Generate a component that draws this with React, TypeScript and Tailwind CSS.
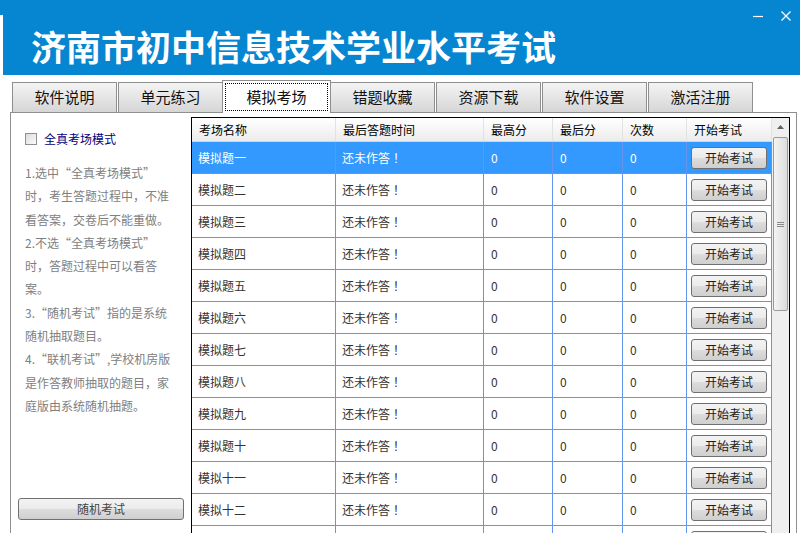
import React from "react"

const tabs = ["软件说明", "单元练习", "模拟考场", "错题收藏", "资源下载", "软件设置", "激活注册"]

const exams = [
  "模拟题一",
  "模拟题二",
  "模拟题三",
  "模拟题四",
  "模拟题五",
  "模拟题六",
  "模拟题七",
  "模拟题八",
  "模拟题九",
  "模拟题十",
  "模拟十一",
  "模拟十二",
  "",
]

const notes = [
  "1.选中“全真考场模式”",
  "时，考生答题过程中，不准",
  "看答案，交卷后不能重做。",
  "2.不选“全真考场模式”",
  "时，答题过程中可以看答",
  "案。",
  "3.“随机考试”指的是系统",
  "随机抽取题目。",
  "4.“联机考试”,学校机房版",
  "是作答教师抽取的题目，家",
  "庭版由系统随机抽题。",
]

const cols = [
  { title: "考场名称", w: "w-[144px]" },
  { title: "最后答题时间", w: "w-[148px]" },
  { title: "最高分", w: "w-[69px]" },
  { title: "最后分", w: "w-[70px]" },
  { title: "次数", w: "w-[64px]" },
  { title: "开始考试", w: "w-[85px]" },
]

function WinButton({ label, className }: { label: string; className?: string }) {
  return (
    <div
      className={`flex items-center justify-center rounded-[3px] border border-[#707070] bg-[linear-gradient(#f3f3f3_0%,#ebebeb_50%,#dddddd_50%,#cfcfcf_100%)] text-[12px] text-[#1a1a1a] ${className ?? ""}`}
    >
      {label}
    </div>
  )
}

export default function App() {
  return (
    <div className="relative w-[800px] h-[533px] overflow-hidden bg-white font-['Noto_Sans_CJK_SC',sans-serif]">
      {/* title bar */}
      <div className="relative h-[75px] bg-[#0686d1] pl-[31px] pt-[28px]">
        <div className="absolute left-0 top-[15px] h-[60px] w-[3px] bg-white" />
        <h1 className="text-[35px] leading-[35px] font-bold text-white">
          济南市初中信息技术学业水平考试
        </h1>
        <div className="absolute right-[8px] top-[10px] flex items-center gap-[16px]">
          <svg width="12" height="12" viewBox="0 0 12 12">
            <path d="M1 6.5h10" stroke="white" strokeWidth="1.2" />
          </svg>
          <svg width="12" height="12" viewBox="0 0 12 12">
            <path d="M1.5 1.5l9 9M10.5 1.5l-9 9" stroke="white" strokeWidth="1.3" />
          </svg>
        </div>
      </div>

      {/* tabs */}
      <div className="flex h-[37px] items-end pl-[12px]">
        {tabs.map((t, i) =>
          i === 2 ? (
            <div
              key={t}
              className="relative z-10 -mb-px -ml-[2px] mr-[-1px] flex h-[33px] w-[109px] items-center justify-center border border-b-0 border-[#8e8f8f] bg-white p-[2px]"
            >
              <div className="flex h-full w-full items-center justify-center border border-dotted border-black text-[15px] text-[#111]">
                {t}
              </div>
            </div>
          ) : (
            <div
              key={t}
              className="mr-px flex h-[30px] w-[105px] items-center justify-center border border-b-0 border-[#8e8f8f] bg-[linear-gradient(#f4f4f4,#d6d6d6)] text-[15px] text-[#111]"
            >
              {t}
            </div>
          )
        )}
      </div>

      {/* tab page */}
      <div className="ml-[10px] flex h-[440px] w-[787px] border border-[#8e8f8f] bg-white">
        {/* left column */}
        <div className="w-[180px] shrink-0">
          <div className="mt-[19px] flex h-[14px] items-center pl-[14px]">
            <div className="h-[12px] w-[12px] border border-[#8e8f8f] bg-[linear-gradient(135deg,#dcdcdc,#fbfbfb)]" />
            <span className="ml-[7px] text-[12px] leading-[14px] text-[#000080]">全真考场模式</span>
          </div>
          <div className="mt-[15px] pl-[14px] text-[12px] leading-[23.3px] text-[#808080]">
            {notes.map((n) => (
              <div key={n} className="whitespace-nowrap">
                {n}
              </div>
            ))}
          </div>
          <WinButton label="随机考试" className="ml-[7px] mt-[81px] h-[22px] w-[166px] text-[#444]" />
        </div>

        {/* grid */}
        <div className="mt-[4px] flex h-[440px] w-[599px] shrink-0 border border-black">
          <div className="w-[580px]">
            <div className="flex h-[24px] border-b border-[#d5d5d5] bg-[linear-gradient(#ffffff,#ececec)]">
              {cols.map((c) => (
                <div
                  key={c.title}
                  className={`${c.w} flex items-center border-r border-[#e2e2e2] pl-[7px] text-[12px] text-black`}
                >
                  {c.title}
                </div>
              ))}
            </div>
            {exams.map((name, i) => {
              const sel = i === 0
              const txt = sel ? "text-white" : "text-[#333]"
              const shown = name !== ""
              return (
                <div
                  key={i}
                  className={`flex h-[32px] border-b border-[#6495ed] text-[12px] ${sel ? "bg-[#3399ff]" : "bg-white"}`}
                >
                  <div className={`${cols[0].w} flex items-center border-r border-[#6495ed] pl-[6px] ${txt}`}>{name}</div>
                  <div className={`${cols[1].w} flex items-center border-r border-[#6495ed] pl-[6px] ${txt}`}>
                    {shown && (
                      <span>
                        还未作答<span className="font-['Noto_Sans_CJK_TC',sans-serif]">！</span>
                      </span>
                    )}
                  </div>
                  <div className={`${cols[2].w} flex items-center border-r border-[#6495ed] pl-[7px] ${txt}`}>{shown ? "0" : ""}</div>
                  <div className={`${cols[3].w} flex items-center border-r border-[#6495ed] pl-[7px] ${txt}`}>{shown ? "0" : ""}</div>
                  <div className={`${cols[4].w} flex items-center border-r border-[#6495ed] pl-[7px] ${txt}`}>{shown ? "0" : ""}</div>
                  <div className={`${cols[5].w} flex items-center border-r border-[#6495ed] pl-[4px]`}>
                    <WinButton label={shown ? "开始考试" : ""} className="h-[22px] w-[76px]" />
                  </div>
                </div>
              )
            })}
          </div>

          {/* scrollbar */}
          <div className="flex w-[17px] flex-col items-center bg-[#efefef]">
            <div className="flex h-[17px] w-full items-center justify-center">
              <svg width="7" height="4" viewBox="0 0 7 4">
                <path d="M3.5 0L7 4H0z" fill="#606060" />
              </svg>
            </div>
            <div className="mt-[2px] flex h-[174px] w-[15px] items-center justify-center rounded-[2px] border border-[#9a9a9a] bg-[linear-gradient(90deg,#f4f4f4,#dcdcdc)]">
              <div className="flex flex-col gap-[1px]">
                <div className="h-px w-[7px] bg-[#8a8a8a]" />
                <div className="h-px w-[7px] bg-[#8a8a8a]" />
                <div className="h-px w-[7px] bg-[#8a8a8a]" />
              </div>
            </div>
          </div>
        </div>
      </div>
    </div>
  )
}
